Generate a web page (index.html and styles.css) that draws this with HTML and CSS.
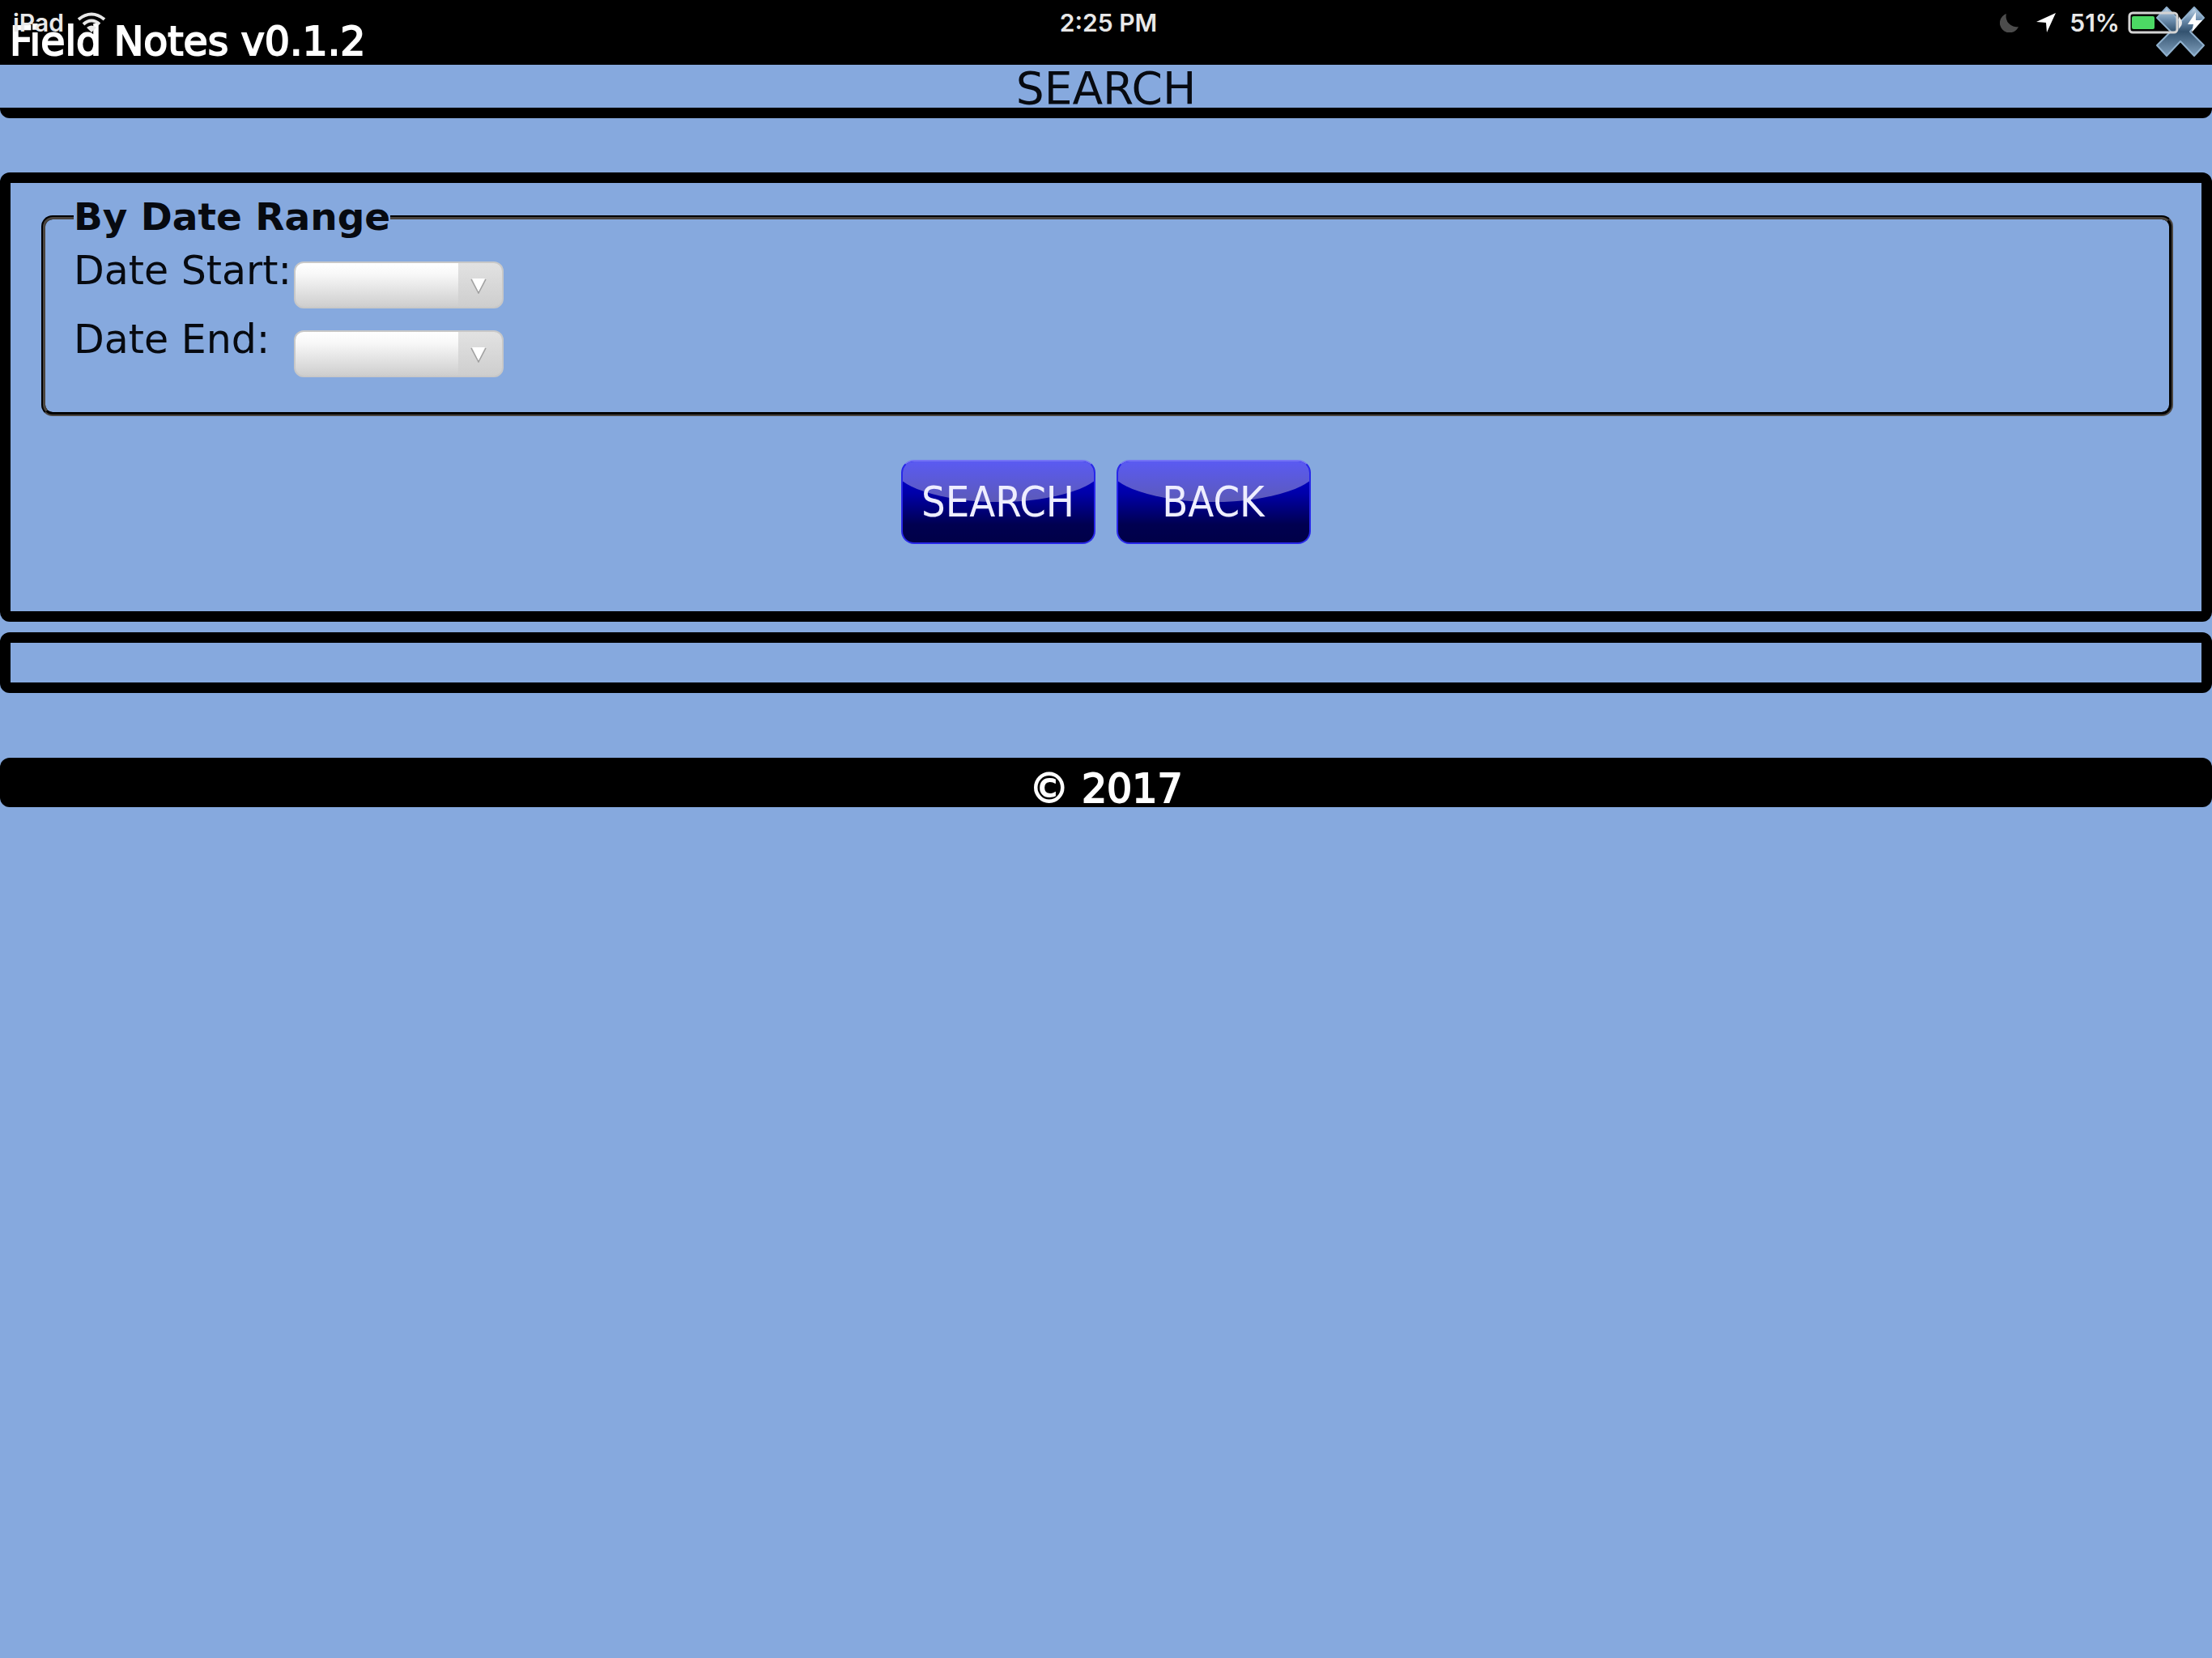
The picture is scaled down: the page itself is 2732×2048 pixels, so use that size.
FILE: index.html
```html
<!DOCTYPE html>
<html lang="en">
<head>
<meta charset="utf-8">
<meta name="viewport" content="width=device-width, initial-scale=1">
<title>Field Notes</title>
<link rel="stylesheet" href="styles.css">
</head>
<body>
<header class="app-header">
  <span class="app-name">Field Notes v0.1.2</span>
  <button class="close" type="button" aria-label="Close">
    <svg viewBox="0 0 62 64" width="62" height="64" aria-hidden="true">
      <defs>
        <linearGradient id="steel" x1="0" y1="0" x2="0" y2="1">
          <stop offset="0" stop-color="#c4d8ea"/>
          <stop offset=".25" stop-color="#6f90b0"/>
          <stop offset=".5" stop-color="#33526f"/>
          <stop offset="1" stop-color="#7f9fbc"/>
        </linearGradient>
      </defs>
      <path d="M14 2 31 20 48 2 60 15 43 32 60 49 48 62 31 44 14 62 2 49 19 32 2 15Z" fill="url(#steel)" stroke="#8fb0cd" stroke-width="2" stroke-linejoin="round"/>
    </svg>
  </button>
  <div class="status">
    <div class="status-left">
      <span>iPad</span>
      <svg viewBox="0 0 36 26" width="36" height="26" aria-hidden="true">
        <g fill="none" stroke="#e8e8e8" stroke-width="4">
          <path d="M2 9Q18-4 34 9"/>
          <path d="M8 15Q18 6 28 15"/>
        </g>
        <path d="M12 19Q18 14 24 19L18 25Z" fill="#e8e8e8"/>
      </svg>
    </div>
    <span class="clock">2:25 PM</span>
    <div class="status-right">
      <svg viewBox="0 0 24 24" width="24" height="24" aria-hidden="true"><path d="M8 1A12 12 0 1 0 23 17A13 13 0 0 1 8 1Z" fill="#4c4c4c"/></svg>
      <svg class="arrow" viewBox="0 0 26 26" width="26" height="26" aria-hidden="true"><path d="M25 1 14 25 13 13 1 12Z" fill="#fff"/></svg>
      <span class="percent">51%</span>
      <svg viewBox="0 0 94 28" width="94" height="28" aria-hidden="true">
        <rect x="2" y="2" width="59" height="24" rx="4" fill="none" stroke="#d4d4d4" stroke-width="3"/>
        <rect x="5" y="6" width="28" height="16" rx="2" fill="#4cd964"/>
        <path d="M64 9q4 5 0 10Z" fill="#e8e8e8" stroke="#e8e8e8" stroke-width="2"/>
        <path d="M84 1 74 16H81L79 26 92 11H84Z" fill="#fff"/>
      </svg>
    </div>
  </div>
</header>
<h1 class="page-title">SEARCH</h1>
<main>
  <form class="panel">
    <fieldset class="range">
      <legend>By Date Range</legend>
      <div class="row">
        <label for="start">Date Start:</label>
        <div class="picker">
          <select id="start"><option></option></select>
          <svg viewBox="0 0 20 20" width="20" height="20" aria-hidden="true"><path d="M2 1H18L10 18Z" fill="#fff"/><path d="M1 2 10 19 19 2" fill="none" stroke="#a0a0a0" stroke-width="1.5"/></svg>
        </div>
      </div>
      <div class="row">
        <label for="end">Date End:</label>
        <div class="picker">
          <select id="end"><option></option></select>
          <svg viewBox="0 0 20 20" width="20" height="20" aria-hidden="true"><path d="M2 1H18L10 18Z" fill="#fff"/><path d="M1 2 10 19 19 2" fill="none" stroke="#a0a0a0" stroke-width="1.5"/></svg>
        </div>
      </div>
    </fieldset>
    <div class="actions">
      <button class="glossy" type="button"><span>SEARCH</span></button>
      <button class="glossy" type="button"><span>BACK</span></button>
    </div>
  </form>
  <section class="panel results" aria-label="Results"></section>
</main>
<footer class="footer">© 2017</footer>
</body>
</html>
```
FILE: styles.css
```css
* { box-sizing: border-box; }

body {
  margin: 0;
  background: #86a9de;
  color: #070a10;
  font: 49px/56px "DejaVu Sans", Verdana, sans-serif;
}

.app-header {
  position: relative;
  display: flex;
  justify-content: space-between;
  height: 80px;
  padding: 7px 8px 0 12px;
  background: #000;
  color: #fff;
}

.app-name {
  padding-top: 17px;
  -webkit-text-stroke: 2px #fff;
}

.close {
  width: 62px;
  height: 64px;
  padding: 0;
  border: 0;
  background: none;
}

.close svg { display: block; }

/* The device status bar lies over the header */
.status {
  position: absolute;
  inset: 12px 10px auto 16px;
  display: grid;
  grid-template-columns: 1fr auto 1fr;
  font: 600 30px/32px Inter, "Liberation Sans", sans-serif;
  color: #e8e8e8;
  pointer-events: none;
}

.status-left,
.status-right {
  display: flex;
  align-items: center;
}

.status-left { gap: 16px; }
.status-right { justify-content: flex-end; }
.arrow { margin: 0 16px 0 20px; }
.percent { margin-right: 10px; }

.page-title {
  margin: 0 0 67px;
  padding-top: 5px;
  border-bottom: 13px solid #000;
  border-radius: 0 0 12px 12px;
  font-size: 55px;
  font-weight: 400;
  line-height: 48px;
  text-align: center;
}

.panel {
  margin: 0 0 13px;
  padding: 14px 35px 83px 38px;
  border: 13px solid #000;
  border-radius: 12px;
}

.range {
  min-width: 0;
  margin: 0;
  padding: 11px 34px 32px 35px;
  border: 5px groove #4a4540;
  border-radius: 14px;
}

.range legend {
  padding: 0;
  font-size: 47px;
  font-weight: 700;
}

.row {
  display: grid;
  grid-template-columns: 272px auto;
  justify-content: start;
  align-items: start;
  height: 85px;
}

.picker {
  position: relative;
  margin-top: 16px;
}

.picker select {
  display: block;
  width: 259px;
  height: 58px;
  border: 2px solid #c8c8c8;
  border-radius: 12px;
  appearance: none;
  background:
    linear-gradient(#e2e2e2, #cecece) right / 54px 100% no-repeat,
    linear-gradient(#fff, #f8f8f8 25%, #cecece);
}

.picker svg {
  position: absolute;
  top: 20px;
  right: 21px;
  pointer-events: none;
}

.actions {
  display: flex;
  justify-content: center;
  gap: 26px;
  margin-top: 54px;
  padding-right: 4px;
}

.glossy {
  position: relative;
  width: 240px;
  height: 104px;
  padding: 0;
  overflow: hidden;
  border: 2px solid #2828e8;
  border-top-color: #7474f4;
  border-radius: 16px;
  background: linear-gradient(#0000e0, #0000a8 40%, #000050 78%, #000048);
  color: #eeeeff;
  font: 52px/64px "Liberation Sans Narrow", "DejaVu Sans Condensed", "DejaVu Sans", sans-serif;
}

/* Curved highlight */
.glossy::before {
  content: "";
  position: absolute;
  inset: 0 -12px auto;
  height: 50px;
  border-radius: 0 0 50% 50% / 0 0 44px 44px;
  background: linear-gradient(#5a5af2, #5c5ab8);
}

.glossy span { position: relative; }

.results {
  height: 75px;
  margin-bottom: 80px;
  padding: 0;
}

.footer {
  height: 61px;
  padding-top: 11px;
  border-radius: 12px;
  background: #000;
  color: #fff;
  text-align: center;
  -webkit-text-stroke: 2px #fff;
}
```
